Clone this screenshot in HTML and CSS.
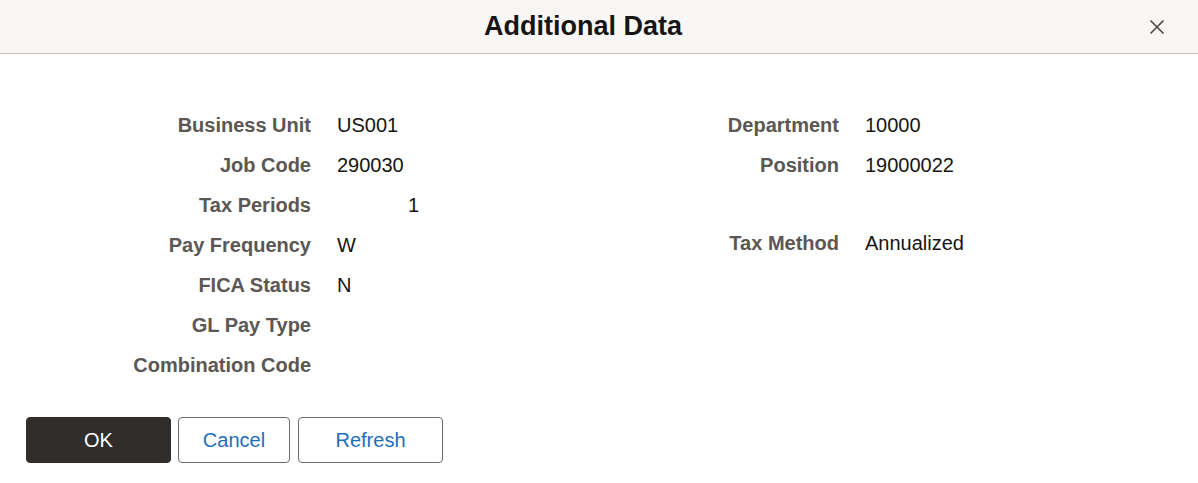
FILE: index.html
```html
<!DOCTYPE html>
<html lang="en">
<head>
<meta charset="utf-8">
<title>Additional Data</title>
<link rel="stylesheet" href="styles.css">
</head>
<body>
<div class="dialog">
  <header class="header">
    <h1 class="title">Additional Data</h1>
    <button class="close" aria-label="Close">
      <svg width="16" height="16" viewBox="0 0 16 16"><path d="M1.5 1.5 L14.5 14.5 M14.5 1.5 L1.5 14.5" stroke="#4f4c4a" stroke-width="1.7" fill="none"/></svg>
    </button>
  </header>
  <main class="content">
    <div class="columns">
      <div class="col">
        <div class="row"><span class="label">Business Unit</span><span class="value">US001</span></div>
        <div class="row"><span class="label">Job Code</span><span class="value">290030</span></div>
        <div class="row"><span class="label">Tax Periods</span><span class="value num">1</span></div>
        <div class="row"><span class="label">Pay Frequency</span><span class="value">W</span></div>
        <div class="row"><span class="label">FICA Status</span><span class="value">N</span></div>
        <div class="row"><span class="label">GL Pay Type</span><span class="value"></span></div>
        <div class="row"><span class="label">Combination Code</span><span class="value"></span></div>
      </div>
      <div class="col">
        <div class="row"><span class="label">Department</span><span class="value">10000</span></div>
        <div class="row"><span class="label">Position</span><span class="value">19000022</span></div>
        <div class="row"><span class="label"></span><span class="value"></span></div>
        <div class="row raised"><span class="label">Tax Method</span><span class="value">Annualized</span></div>
      </div>
    </div>
    <div class="actions">
      <button class="btn primary">OK</button>
      <button class="btn secondary cancel">Cancel</button>
      <button class="btn secondary refresh">Refresh</button>
    </div>
  </main>
</div>
</body>
</html>
```
FILE: styles.css
```css
* { box-sizing: border-box; }
html, body {
  margin: 0;
  padding: 0;
  background: #ffffff;
  font-family: "Liberation Sans", Arial, sans-serif;
  color: #000;
}
.dialog {
  width: 1198px;
  height: 483px;
}
.header {
  position: relative;
  height: 54px;
  background: #f8f7f6;
  border-bottom: 1px solid #c4c0bb;
  display: flex;
  align-items: center;
  justify-content: center;
}
.title {
  margin: 0;
  font-size: 27px;
  font-weight: bold;
  color: #161513;
  padding-left: 0;
  line-height: 1;
  transform: translateX(-16px);
}
.close {
  position: absolute;
  right: 32px;
  top: 18px;
  width: 18px;
  height: 18px;
  padding: 0;
  border: 0;
  background: transparent;
  display: flex;
  align-items: center;
  justify-content: center;
}
.content {
  padding-top: 51px;
}
.columns {
  display: flex;
}
.col {
  width: 528px;
  display: flex;
  flex-direction: column;
}
.row {
  height: 40px;
  display: grid;
  grid-template-columns: 311px 191px;
  column-gap: 26px;
  align-items: center;
  font-size: 20px;
}
.row.raised { margin-top: -2px; }
.label {
  text-align: right;
  font-weight: bold;
  color: #5b5754;
}
.value {
  color: #161513;
}
.value.num {
  width: 82px;
  text-align: right;
}
.actions {
  display: flex;
  padding-left: 26px;
  margin-top: 32px;
  gap: 7px;
}
.btn {
  height: 46px;
  font-family: "Liberation Sans", Arial, sans-serif;
  font-size: 20px;
  border-radius: 4px;
  padding: 0;
  cursor: pointer;
}
.primary {
  width: 145px;
  background: #312d2a;
  border: 1px solid #312d2a;
  color: #ffffff;
}
.secondary {
  background: #ffffff;
  border: 1px solid #6f6c69;
  color: #1d6fbb;
}
.cancel { width: 112px; }
.refresh { width: 145px; margin-left: 1px; }
```
